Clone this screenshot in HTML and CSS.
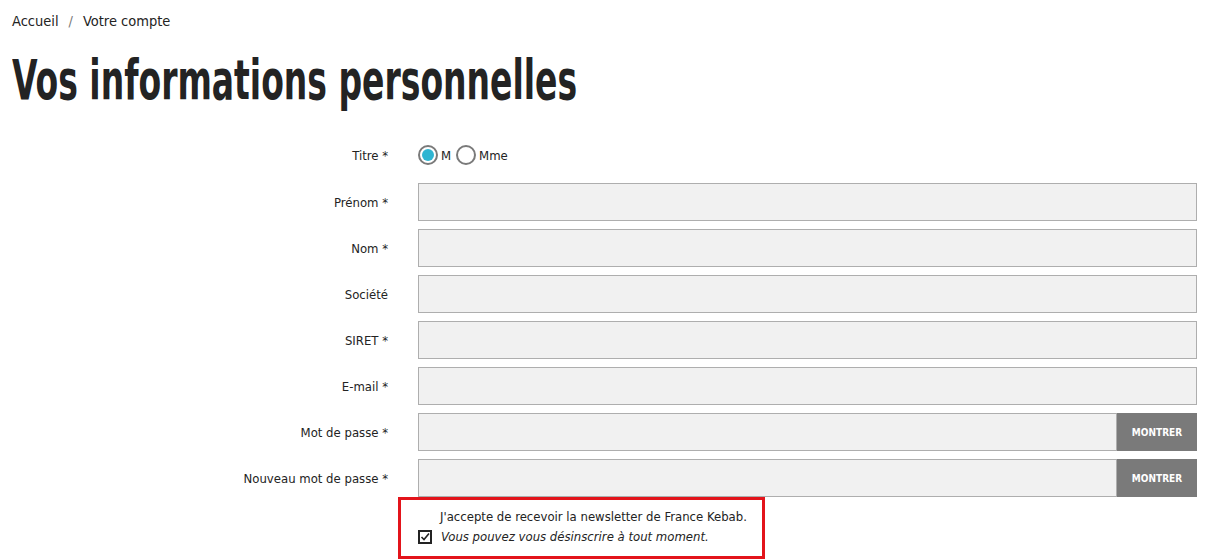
FILE: index.html
```html
<!DOCTYPE html>
<html lang="fr">
<head>
<meta charset="utf-8">
<title>Vos informations personnelles</title>
<link rel="stylesheet" href="styles.css">
</head>
<body>
<div class="page">
  <nav class="breadcrumb"><a href="#">Accueil</a><span class="sep">/</span><a href="#">Votre compte</a></nav>
  <h1 class="title"><span class="title-text">Vos informations personnelles</span></h1>
  <form class="form">
    <div class="row row-radio">
      <label class="label">Titre *</label>
      <div class="radios">
        <span class="radio checked"></span><span class="radio-text">M</span>
        <span class="radio"></span><span class="radio-text">Mme</span>
      </div>
    </div>
    <div class="row"><label class="label">Prénom *</label><div class="field"><span class="input"></span></div></div>
    <div class="row"><label class="label">Nom *</label><div class="field"><span class="input"></span></div></div>
    <div class="row"><label class="label">Société</label><div class="field"><span class="input"></span></div></div>
    <div class="row"><label class="label">SIRET *</label><div class="field"><span class="input"></span></div></div>
    <div class="row"><label class="label">E-mail *</label><div class="field"><span class="input"></span></div></div>
    <div class="row"><label class="label">Mot de passe *</label><div class="field"><span class="input"></span><span class="btn">MONTRER</span></div></div>
    <div class="row"><label class="label">Nouveau mot de passe *</label><div class="field"><span class="input"></span><span class="btn">MONTRER</span></div></div>
    <div class="row row-check">
      <span></span>
      <div class="newsletter">
        <p class="nl-line1">J'accepte de recevoir la newsletter de France Kebab.</p>
        <div class="nl-line2">
          <span class="checkbox"><svg viewBox="0 0 14 14" width="14" height="14"><rect x="1" y="1" width="12" height="12" fill="none" stroke="#232323" stroke-width="2"/><path d="M3.5 7 L6 9.5 L11 3.5" fill="none" stroke="#232323" stroke-width="1.6"/></svg></span>
          <em>Vous pouvez vous désinscrire à tout moment.</em>
        </div>
      </div>
    </div>
  </form>
</div>
</body>
</html>
```
FILE: styles.css
```css
* { box-sizing: border-box; }
html, body { margin: 0; padding: 0; background: #fff; }
body {
  font-family: "DejaVu Sans", "Noto Sans", sans-serif;
  font-stretch: condensed;
  color: #232323;
  font-size: 13px;
}
.page { padding: 11px 12px 0 12px; }
.breadcrumb { font-size: 14.5px; line-height: 20px; height: 20px; }
.breadcrumb a { color: #232323; text-decoration: none; }
.breadcrumb .sep { margin: 0 10px; color: #7a7a7a; }
.title {
  margin: 17px 0 0 0;
  font-family: "DejaVu Sans", sans-serif;
  font-stretch: condensed;
  font-weight: 700;
  font-size: 56px;
  line-height: 60px;
  height: 60px;
  color: #232323;
  white-space: nowrap;
}
.title-text { display: inline-block; transform: scaleX(0.655); transform-origin: left center; position: relative; top: 2px; }
.form { margin-top: 27px; display: flex; flex-direction: column; gap: 8px; }
.row { display: grid; grid-template-columns: 376px 779px; column-gap: 30px; align-items: center; height: 38px; }
.row-radio { height: 40px; }
.label { text-align: right; font-size: 13px; }
.field { display: flex; height: 38px; }
.input { flex: 1; background: #f1f1f1; border: 1px solid #aeaeae; height: 38px; }
.btn { width: 80px; height: 38px; background: #7a7a7a; color: #fff; font-weight: 700; font-size: 10px; display: flex; align-items: center; justify-content: center; }
.radios { display: flex; align-items: center; gap: 3px; font-size: 13px; }
.radio { width: 20px; height: 20px; border-radius: 50%; border: 2px solid #7a7a7a; display: inline-flex; align-items: center; justify-content: center; }
.radio.checked::after { content: ""; width: 12px; height: 12px; border-radius: 50%; background: #2fb5d2; }
.radio-text { margin-right: 2px; }
.row-check { height: auto; align-items: start; margin-top: -8px; }
.newsletter { margin-left: -20px; width: 367px; border: 3px solid #e3141b; padding: 7px 0 6px 17px; height: 62px; }
.nl-line1 { margin: 0 0 0 22px; font-size: 13px; line-height: 20px; }
.nl-line2 { display: flex; align-items: center; gap: 9px; line-height: 20px; font-size: 13px; }
.checkbox { display: inline-flex; width: 14px; height: 14px; }
```
